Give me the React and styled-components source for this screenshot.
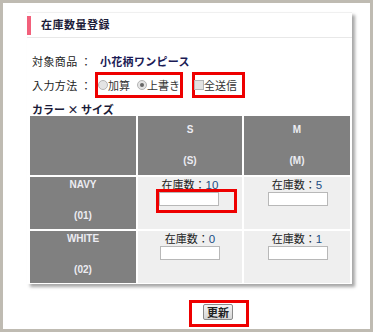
import React from "react";
import styled, { createGlobalStyle } from "styled-components";

const GlobalStyle = createGlobalStyle`
  html, body {
    margin: 0;
    padding: 0;
    background: #ffffff;
  }
  body {
    font-family: "Noto Sans CJK JP", "DejaVu Sans", sans-serif;
    color: #222;
  }
`;

const Frame = styled.div`
  box-sizing: border-box;
  width: 373px;
  height: 332px;
  border: 3px solid #bfbbb2;
  padding: 9px 0 0 24px;
  background: #fff;
`;

const Panel = styled.section`
  width: 325px;
  background: #fff;
  border-top: 1px solid #f0f0f0;
  box-shadow: 3px 3px 3px rgba(0, 0, 0, 0.35);
`;

const PanelHeader = styled.header`
  height: 24px;
  display: flex;
  align-items: center;
  border-bottom: 1px solid #e8e8e8;
`;

const Accent = styled.span`
  width: 4px;
  height: 19px;
  background: #f2607b;
  margin-right: 10px;
`;

const Title = styled.h1`
  margin: -3px 0 0;
  font-size: 11px;
  font-weight: bold;
  color: #1c1c38;
  letter-spacing: 0.5px;
`;

const Body = styled.div`
  padding: 12px 2px 1px 3px;
`;

const FieldRow = styled.div`
  display: flex;
  align-items: center;
  height: ${(p) => p.$h || 22}px;
  padding-left: 2px;
  font-size: 11px;
  white-space: nowrap;
`;

const Label = styled.span`
  flex-shrink: 0;
  width: ${(p) => p.$w || 63}px;
  letter-spacing: 0.4px;
`;

const Product = styled.span`
  font-weight: bold;
  color: #1b1b55;
  letter-spacing: 0.3px;
`;

const Marked = styled.div`
  box-sizing: border-box;
  flex-shrink: 0;
  display: flex;
  align-items: center;
  gap: ${(p) => p.$gap || 0}px;
  width: ${(p) => p.$w}px;
  height: 26px;
  margin-right: 9px;
  border: 3px solid #ee0000;
`;

const Option = styled.label`
  display: flex;
  align-items: center;
  color: #333;
  white-space: nowrap;
`;

const Radio = styled.input.attrs({ type: "radio" })`
  appearance: none;
  flex-shrink: 0;
  margin: 0;
  width: 10px;
  height: 10px;
  border-radius: 50%;
  border: 1px solid #b5b5b5;
  background: #e4e4e4;
  box-sizing: border-box;
  position: relative;

  &:checked::after {
    content: "";
    position: absolute;
    left: 2px;
    top: 2px;
    width: 4px;
    height: 4px;
    border-radius: 50%;
    background: #666;
  }
`;

const Check = styled.input.attrs({ type: "checkbox" })`
  appearance: none;
  flex-shrink: 0;
  margin: 0 0 0 -1px;
  width: 10px;
  height: 10px;
  border: 1px solid #b5b5b5;
  background: #e2e2e2;
  box-sizing: border-box;
`;

const SectionTitle = styled.div`
  font-size: 11px;
  font-weight: bold;
  color: #1b1b38;
  padding: 5px 0 0 2px;
  height: 13px;
  line-height: 13px;
`;

const Grid = styled.div`
  display: grid;
  grid-template-columns: 106px 104px 106px;
  grid-template-rows: 59px 52px 52px;
  gap: 2px;
`;

const HeadCell = styled.div`
  background: #808080;
  color: #ececf2;
  font-family: "Liberation Sans", Arial, sans-serif;
  font-weight: bold;
  font-size: 10px;
  display: flex;
  flex-direction: column;
  align-items: center;
  justify-content: ${(p) => (p.$top ? "flex-start" : "center")};
  padding-top: ${(p) => (p.$top ? 2 : 0)}px;
  gap: 19px;
  line-height: 12px;
`;

const DataCell = styled.div`
  background: #efefef;
  display: flex;
  flex-direction: column;
  align-items: center;
  padding-top: 0;
  font-size: 11px;
`;

const Stock = styled.div`
  line-height: 14px;
  height: 15px;
  color: #222;
`;

const Num = styled.span`
  color: #1a4d85;
  font-family: "Liberation Sans", Arial, sans-serif;
  font-size: 11.5px;
`;

const Qty = styled.input`
  box-sizing: border-box;
  width: 60px;
  height: 14px;
  border: 1px solid #b8b8b8;
  background: #fff;
  padding: 0;
  margin: 0;
  margin-left: ${(p) => p.$shift || 0}px;
`;

const QtyMark = styled.div`
  display: flex;
  border: 3px solid #ee0000;
  padding: 0 15px 4px 0;
  margin-left: 13px;
  margin-top: -3px;
`;

const Footer = styled.div`
  display: flex;
  padding-top: 16px;
  padding-left: 162px;
`;

const ButtonMark = styled.div`
  display: flex;
  border: 3px solid #ee0000;
  padding: 1px 13px 4px 11px;
`;

const UpdateButton = styled.button`
  height: 16px;
  width: 30px;
  padding: 0;
  font-family: "Noto Sans CJK JP", sans-serif;
  font-size: 11px;
  font-weight: bold;
  line-height: 12px;
  color: #222;
  border: 1px solid #8a8a8a;
  border-radius: 2px;
  background: linear-gradient(#f4f4f4, #d6d6d6);
`;

const sizes = [
  { name: "S", code: "S" },
  { name: "M", code: "M" },
];

const rows = [
  { name: "NAVY", code: "01", stock: [10, 5] },
  { name: "WHITE", code: "02", stock: [0, 1] },
];

export default function App() {
  return (
    <>
      <GlobalStyle />
      <Frame>
        <Panel>
          <PanelHeader>
            <Accent />
            <Title>在庫数量登録</Title>
          </PanelHeader>
          <Body>
            <FieldRow>
              <Label $w={68}>対象商品 ：</Label>
              <Product>小花柄ワンピース</Product>
            </FieldRow>
            <FieldRow $h={26}>
              <Label>入力方法 ：</Label>
              <Marked $w={88} $gap={7}>
                <Option>
                  <Radio name="mode" />
                  加算
                </Option>
                <Option>
                  <Radio name="mode" defaultChecked />
                  上書き
                </Option>
              </Marked>
              <Marked $w={53}>
                <Option>
                  <Check />
                  全送信
                </Option>
              </Marked>
            </FieldRow>
            <SectionTitle>カラー × サイズ</SectionTitle>
            <Grid>
              <HeadCell />
              {sizes.map((s) => (
                <HeadCell key={s.code}>
                  <span>{s.name}</span>
                  <span>({s.code})</span>
                </HeadCell>
              ))}
              {rows.map((r, ri) => (
                <React.Fragment key={r.code}>
                  <HeadCell $top>
                    <span>{r.name}</span>
                    <span>({r.code})</span>
                  </HeadCell>
                  {r.stock.map((n, ci) => (
                    <DataCell key={ci}>
                      <Stock>
                        在庫数：<Num>{n}</Num>
                      </Stock>
                      {ri === 0 && ci === 0 ? (
                        <QtyMark>
                          <Qty type="text" />
                        </QtyMark>
                      ) : (
                        <Qty type="text" $shift={ci === 1 ? 2 : 0} />
                      )}
                    </DataCell>
                  ))}
                </React.Fragment>
              ))}
            </Grid>
          </Body>
        </Panel>
        <Footer>
          <ButtonMark>
            <UpdateButton type="button">更新</UpdateButton>
          </ButtonMark>
        </Footer>
      </Frame>
    </>
  );
}
